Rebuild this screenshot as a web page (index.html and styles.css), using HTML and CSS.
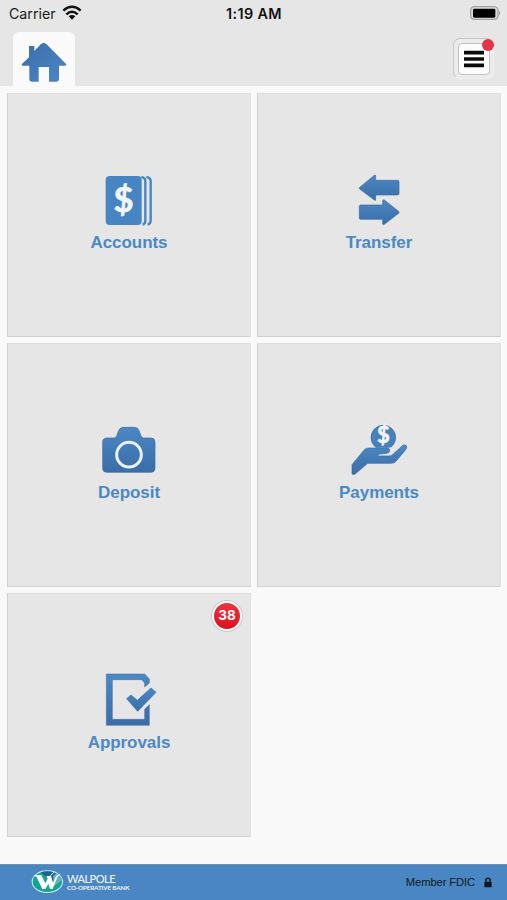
FILE: index.html
```html
<!DOCTYPE html>
<html lang="en">
<head>
<meta charset="utf-8">
<title>Walpole Co-operative Bank</title>
<link rel="stylesheet" href="styles.css">
</head>
<body>
<svg class="defs" width="0" height="0">
  <defs>
    <linearGradient id="blue" x1="0" y1="0" x2="0" y2="1">
      <stop offset="0" stop-color="#4b88c4"/><stop offset="1" stop-color="#3a6da8"/>
    </linearGradient>
    <linearGradient id="house" x1="0" y1="0" x2="1" y2="1">
      <stop offset="0" stop-color="#3b6ea8"/><stop offset="1" stop-color="#4b87c6"/>
    </linearGradient>
  </defs>
</svg>
<header class="top">
  <div class="status">
    <div class="carrier"><span>Carrier</span>
      <svg width="20" height="16" viewBox="0 0 60 48"><g fill="none" stroke="#111" stroke-width="7"><path d="M4 17Q30-6 56 17"/><path d="M13 28Q30 12 47 28"/></g><path d="M20 34Q30 26 40 34L30 44Z" fill="#111"/></svg>
    </div>
    <div class="time">1:19 AM</div>
    <div class="battery"><svg width="31" height="16" viewBox="0 0 93 48"><rect x="2" y="5" width="82" height="38" rx="11" fill="#ddd" stroke="#a2a2a2" stroke-width="4"/><rect x="9" y="11" width="67" height="27" rx="4" fill="#000"/><path d="M87 18q8 6 0 12z" fill="#999"/></svg></div>
  </div>
  <div class="nav">
    <div class="home">
      <svg width="62" height="55" viewBox="0 0 186 165"><path fill="url(#house)" d="M26 97L48 76V42H64V57L84 36Q92 30 100 36L160 97Q160 101 156 101H138V142Q138 149 131 149H108V105H77V149H56Q49 149 49 142V101H29Q25 101 26 97Z"/></svg>
    </div>
    <div class="menu"><div class="menu-face"><svg width="20" height="18" viewBox="0 0 60 54"><path d="M2 7H58M2 26H58M2 45H58" stroke="#0b0b0b" stroke-width="11" stroke-linecap="round" transform="translate(0 1)"/></svg></div><b class="dot"></b></div>
  </div>
</header>
<main class="grid">
  <section class="tile">
    <svg class="icon" viewBox="0 0 300 180"><rect x="77" y="33" width="108" height="147" rx="12" fill="#4784c2"/><g fill="none" stroke="#4784c2" stroke-width="7"><path d="M184 36q12 2 12 12v119q0 9-8 12"/><path d="M199 36q13 2 13 12v119q0 9-9 12"/></g><text class="dollar" x="131" y="142" text-anchor="middle" font-size="104">$</text></svg>
    <span class="label">Accounts</span>
  </section>
  <section class="tile">
    <svg class="icon" viewBox="0 0 300 180"><g fill="url(#blue)" stroke="#3b6ba0" stroke-width="2" stroke-linejoin="round"><path d="M88 68L133 31Q137 29 137 33V46H203Q207 46 207 50V86Q207 90 203 90H137V103Q137 108 133 105L88 71Z"/><path d="M207 140L163 105Q158 103 158 108V120H92Q88 120 88 124V159Q88 163 92 163H158V176Q158 181 163 178L207 144Z"/></g></svg>
    <span class="label">Transfer</span>
  </section>
  <section class="tile">
    <svg class="icon" viewBox="0 0 300 180"><path fill="url(#blue)" stroke="#3a6ba2" stroke-width="2" d="M81 69H103Q108 68 110 62L116 47Q120 37 130 37H163Q173 37 177 47L183 62Q185 68 190 69H213Q225 69 225 81V160Q225 172 213 172H80Q68 172 68 160V81Q68 69 81 69Z"/><circle cx="147" cy="119" r="37" fill="none" stroke="#edf1f5" stroke-width="9"/></svg>
    <span class="label">Deposit</span>
  </section>
  <section class="tile">
    <svg class="icon" viewBox="0 0 300 180"><path d="M134 94A37 37 0 1 1 186 94Q182 97 176 97H138Z" fill="#4581bd" stroke="#3a6ba2" stroke-width="2"/><text class="dollar" x="160" y="85" text-anchor="middle" font-size="66">$</text><path fill="url(#blue)" stroke="#3a6ba2" stroke-width="2" stroke-linejoin="round" d="M66 149L103 104Q108 99 117 99H171Q179 99 179 106Q179 113 171 115L144 118V123H177Q185 123 190 117L217 92Q223 87 229 92Q232 97 227 104L198 139Q192 145 184 145H113L78 175Q73 181 66 177Z"/></svg>
    <span class="label">Payments</span>
  </section>
  <section class="tile">
    <svg class="icon" viewBox="0 0 300 180"><path fill="url(#blue)" stroke="#3a6ba2" stroke-width="1.5" d="M79 27H194L208 42V54L194 66V55L186 44H97V163H194V133L208 119V181H79Z"/><path fill="url(#blue)" stroke="#3a6ba2" stroke-width="2" d="M140 101L153 90L172 106L213 69L228 82L173 139Z"/></svg>
    <span class="label">Approvals</span>
    <b class="badge">38</b>
  </section>
</main>
<footer class="footer">
  <div class="brand">
    <svg width="33" height="24" viewBox="0 0 99 72"><clipPath id="oval"><ellipse cx="49" cy="35" rx="44" ry="31"/></clipPath><ellipse cx="49" cy="35" rx="47" ry="34" fill="#d9eef2"/><g clip-path="url(#oval)"><path fill="#12a590" d="M0 0H99V72H0Z"/><path fill="#1c6099" d="M22 0H78L62 38L45 20Z"/><path fill="#5eb3c5" d="M66 18L84 5L99 25L70 48Z"/></g><path fill="#fff" d="M8 15H31L43 40L50 26L46 18H60L66 38L76 17L82 14L65 57H57L52 42L43 57H34L17 22Z"/><path stroke="#fff" stroke-width="3" d="M58 17L70 6M72 24L88 12"/></svg>
    <div class="brand-text"><span class="name">WALPOLE</span><span class="sub">CO-OPERATIVE BANK</span></div>
  </div>
  <div class="member"><span>Member FDIC</span>
    <svg width="8" height="11" viewBox="0 0 24 33"><rect x="1" y="14" width="22" height="17" rx="2" fill="#101820"/><path d="M6 15V10a6 6 0 0 1 12 0v5" fill="none" stroke="#101820" stroke-width="4.5"/></svg>
  </div>
</footer>
</body>
</html>
```
FILE: styles.css
```css
* { box-sizing: border-box; }
body {
  margin: 0;
  height: 900px;
  display: flex;
  flex-direction: column;
  background: #f9f9f9;
  font-family: "Liberation Sans", Arial, sans-serif;
  overflow: hidden;
}
svg { display: block; flex: none; }
.defs { position: absolute; }
.top { height: 86px; background: #e6e6e6; }
.status {
  height: 32px;
  padding: 0 6px 0 9px;
  display: grid;
  grid-template-columns: 1fr auto 1fr;
  font: 14.2px/28px Inter, sans-serif;
  color: #1a1a1a;
}
.carrier { display: flex; gap: 6px; }
.carrier svg { margin-top: 5px; }
.time { font-weight: 600; font-size: 14.4px; letter-spacing: 0.35px; margin-left: -2px; color: #111; }
.battery { display: flex; justify-content: flex-end; padding-top: 5px; }
.nav { display: flex; justify-content: space-between; padding: 0 13px 0 13px; }
.home { width: 62px; height: 55px; background: #fafafa; border-radius: 6px 6px 0 0; }
.menu {
  position: relative;
  width: 41px;
  height: 41px;
  margin-top: 6px;
  padding: 4px;
  border-radius: 7px;
  background: #ebebeb;
  border: 1px solid #f0f0f0;
  border-top-color: #c5c5c5;
  border-left-color: #c9c9c9;
}
.menu-face {
  width: 32px;
  height: 32px;
  display: flex;
  align-items: center;
  justify-content: center;
  background: #fcfcfc;
  border: 1px solid #c4c4c4;
  border-radius: 4px;
}
.dot {
  position: absolute;
  top: 0;
  right: -1px;
  width: 12px;
  height: 12px;
  border-radius: 50%;
  background: #e23548;
}
.grid {
  flex: 1;
  display: grid;
  grid-template-columns: 244px 244px;
  grid-auto-rows: 244px;
  align-content: start;
  gap: 6px;
  padding: 6.5px 0 0 7px;
}
.tile {
  position: relative;
  display: flex;
  flex-direction: column;
  align-items: center;
  padding-top: 71.5px;
  background: #e6e6e6;
  border: 1px solid #d0d0d0;
  border-top-color: #dedede;
  border-right-color: #e2e2e2;
}
.icon { width: 100px; height: 60px; margin-left: 2px; overflow: visible; }
.dollar { font-family: Lato, sans-serif; font-weight: 700; fill: #f2f5f8; stroke: #f2f5f8; stroke-width: 2px; }
.label { margin-top: 8px; font-weight: 700; font-size: 17px; line-height: 20px; letter-spacing: -0.05px; color: #4b89c5; }
.badge {
  position: absolute;
  top: 7px;
  right: 8px;
  width: 30px;
  height: 30px;
  border: 2px solid #fafafa;
  border-radius: 50%;
  background: linear-gradient(#ef3340, #dc0f20);
  box-shadow: 0 0 0 1px #c8c8c8;
  color: #fff;
  font: 700 13.5px/25px Inter, sans-serif;
  text-align: center;
}
.footer {
  height: 36px;
  display: flex;
  justify-content: space-between;
  padding: 0 15px 0 31px;
  background: #4a86c4;
  border-top: 1px solid #7292b0;
}
.brand { display: flex; gap: 3px; padding-top: 5px; }
.brand-text { display: flex; flex-direction: column; padding-top: 4px; color: #eef5fb; font-family: Lato, sans-serif; white-space: nowrap; }
.name { font-size: 11px; line-height: 10px; letter-spacing: -0.5px; font-weight: 500; }
.sub { font-size: 6.3px; line-height: 7px; font-weight: 700; letter-spacing: -0.15px; }
.member { display: flex; align-items: center; gap: 9px; padding-bottom: 1px; font-size: 11.2px; letter-spacing: -0.1px; color: #101820; }
```
